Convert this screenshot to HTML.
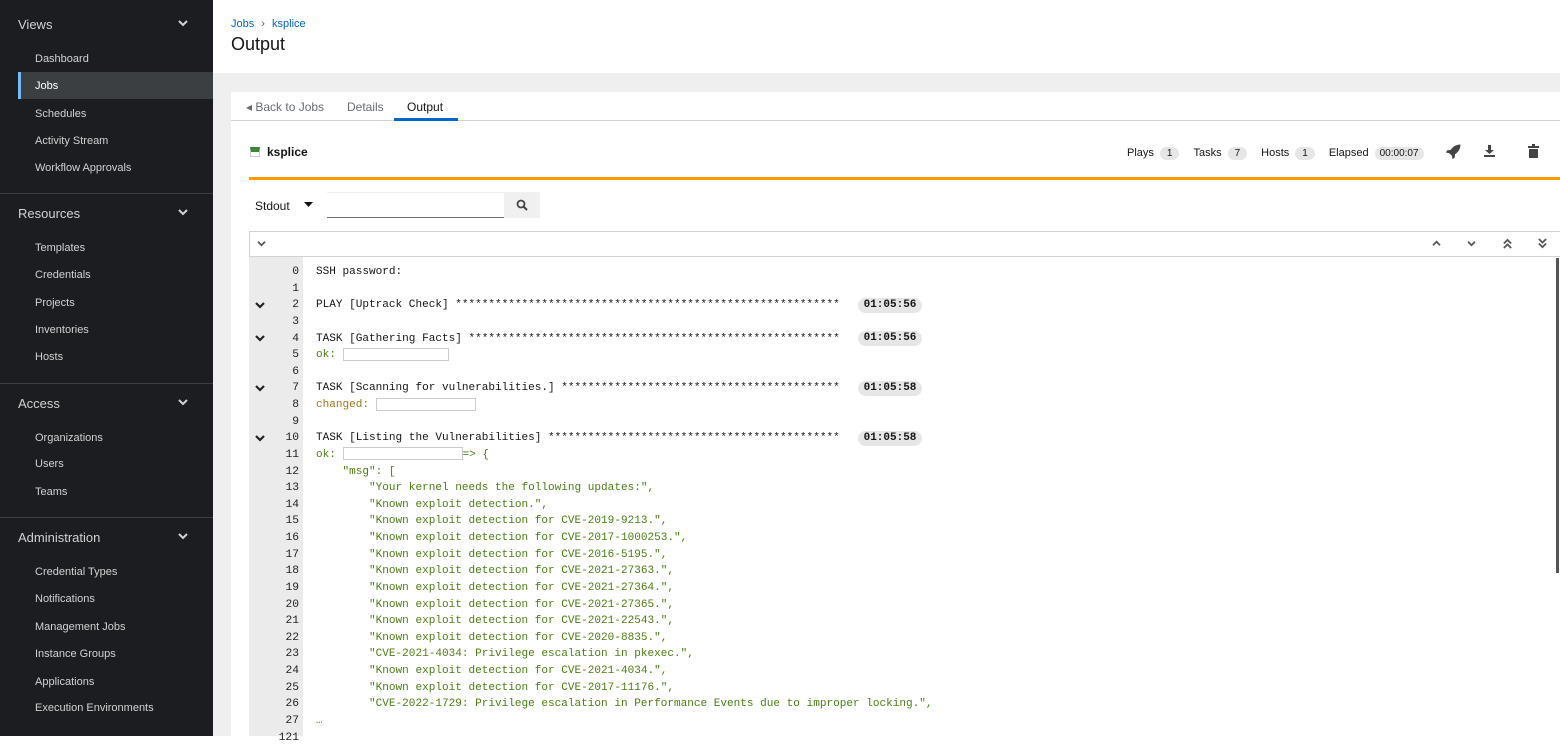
<!DOCTYPE html>
<html><head><meta charset="utf-8"><style>
*{margin:0;padding:0;box-sizing:border-box}
body{width:1560px;height:736px;overflow:hidden;background:#fff;font-family:"Liberation Sans",sans-serif;position:relative}
.sb{position:absolute;left:0;top:0;width:213px;height:736px;background:#1b1d21}
.sh{position:absolute;left:18px;font-size:13px;color:#d2d2d2}
.chev{position:absolute;left:178px;width:10px;height:10px}
.si{position:absolute;left:35px;font-size:11px;color:#d2d2d2}
.dv{position:absolute;left:0;width:213px;height:1px;background:#3c3f42}
.a{position:absolute}
.ln{position:absolute;left:249px;width:54px;text-align:right;padding-right:4px;color:#222;font-family:"Liberation Mono",monospace;font-size:11.3px;line-height:16.63px}
.tx{position:absolute;left:316px;white-space:pre;color:#151515;font-family:"Liberation Mono",monospace;font-size:11.05px;line-height:16.63px}
.g{color:#4d7d14}.c{color:#a6731a}
.ts{position:absolute;left:858px;width:64px;height:15px;border-radius:8px;background:#e6e6e6;font-family:"Liberation Mono",monospace;font-size:11px;font-weight:bold;text-align:center;line-height:15px;color:#151515}
.cv{position:absolute;left:255px;width:10px;height:8px}
.red{display:inline-block;border:1px solid #ccc;background:#fff;height:13px;vertical-align:middle}
.badge{display:inline-block;background:#e6e6e6;border-radius:8px;font-size:10px;padding:1px 7px;margin:0 14px 0 6px;color:#151515}
</style></head><body>
<div class="sb">
<div class="sh" style="top:17px">Views</div>
<svg class="chev" style="top:18px" viewBox="0 0 10 10"><path d="M1 3l4 4 4-4" stroke="#d2d2d2" stroke-width="2" fill="none"/></svg>
<div class="si" style="top:53px">Dashboard</div>
<div class="a" style="left:18px;top:72px;width:195px;height:27px;background:#3c3f42;border-left:3px solid #73bcf7"></div>
<div class="si" style="top:80px;color:#fff">Jobs</div>
<div class="si" style="top:108px">Schedules</div>
<div class="si" style="top:135px">Activity Stream</div>
<div class="si" style="top:162px">Workflow Approvals</div>
<div class="dv" style="top:193px"></div>
<div class="sh" style="top:206px">Resources</div>
<svg class="chev" style="top:207px" viewBox="0 0 10 10"><path d="M1 3l4 4 4-4" stroke="#d2d2d2" stroke-width="2" fill="none"/></svg>
<div class="si" style="top:242px">Templates</div>
<div class="si" style="top:269px">Credentials</div>
<div class="si" style="top:297px">Projects</div>
<div class="si" style="top:324px">Inventories</div>
<div class="si" style="top:351px">Hosts</div>
<div class="dv" style="top:383px"></div>
<div class="sh" style="top:396px">Access</div>
<svg class="chev" style="top:397px" viewBox="0 0 10 10"><path d="M1 3l4 4 4-4" stroke="#d2d2d2" stroke-width="2" fill="none"/></svg>
<div class="si" style="top:432px">Organizations</div>
<div class="si" style="top:458px">Users</div>
<div class="si" style="top:486px">Teams</div>
<div class="dv" style="top:517px"></div>
<div class="sh" style="top:530px">Administration</div>
<svg class="chev" style="top:531px" viewBox="0 0 10 10"><path d="M1 3l4 4 4-4" stroke="#d2d2d2" stroke-width="2" fill="none"/></svg>
<div class="si" style="top:566px">Credential Types</div>
<div class="si" style="top:593px">Notifications</div>
<div class="si" style="top:621px">Management Jobs</div>
<div class="si" style="top:648px">Instance Groups</div>
<div class="si" style="top:676px">Applications</div>
<div class="si" style="top:702px">Execution Environments</div>
</div>

<div class="a" style="left:231px;top:18px;font-size:11px;color:#06c">Jobs <span style="color:#555;margin:0 4px">›</span> ksplice</div>
<div class="a" style="left:231px;top:34px;font-size:18px;color:#151515">Output</div>
<div class="a" style="left:213px;top:73px;width:1347px;height:19px;background:#efefef"></div>
<div class="a" style="left:213px;top:92px;width:18px;height:644px;background:#efefef"></div>

<div class="a" style="left:231px;top:120px;width:1329px;height:1px;background:#d2d2d2"></div>
<div class="a" style="left:246px;top:100px;font-size:12px;color:#6a6e73">◂ Back to Jobs</div>
<div class="a" style="left:347px;top:100px;font-size:12px;color:#6a6e73">Details</div>
<div class="a" style="left:407px;top:100px;font-size:12px;color:#151515">Output</div>
<div class="a" style="left:394px;top:118px;width:64px;height:3px;background:#06c"></div>

<div class="a" style="left:250px;top:147px;width:10px;height:10px;border:1px solid #ccc;border-top:5px solid #3e8635"></div>
<div class="a" style="left:267px;top:145px;font-size:12px;font-weight:bold;color:#151515">ksplice</div>
<div class="a" style="left:1127px;top:147px;font-size:11px;color:#151515">Plays<span class="badge">1</span>Tasks<span class="badge">7</span>Hosts<span class="badge">1</span>Elapsed<span class="badge" style="margin-right:0;padding:1px 5px">00:00:07</span></div>
<svg class="a" style="left:1446px;top:144px" width="15" height="15" viewBox="0 0 14 14"><path d="M13.5 0.5C9 0.5 6 3 4.5 5.5L1 6l-1 2 3 0.5 2.5 2.5 0.5 3 2-1 0.5-3.5C11 8 13.5 5 13.5 0.5z" fill="#444"/></svg>
<svg class="a" style="left:1483px;top:144px" width="13" height="14" viewBox="0 0 13 14"><path d="M5 1h3v5h3L6.5 10 2 6h3zM1 11h11v2H1z" fill="#444"/></svg>
<svg class="a" style="left:1528px;top:144px" width="11" height="14" viewBox="0 0 11 14"><path d="M0 2h11v2H0zM4 0h3v2H4zM1 5h9v9H1z" fill="#444"/></svg>
<div class="a" style="left:249px;top:177px;width:1311px;height:3px;background:#f90"></div>

<div class="a" style="left:255px;top:199px;font-size:12px;color:#151515">Stdout</div>
<svg class="a" style="left:304px;top:202px" width="9" height="6" viewBox="0 0 9 6"><path d="M0 0h9L4.5 5z" fill="#151515"/></svg>
<div class="a" style="left:327px;top:192px;width:177px;height:26px;border-top:1px solid #f0f0f0;border-bottom:1px solid #6a6e73"></div>
<div class="a" style="left:504px;top:192px;width:36px;height:26px;background:#f0f0f0"></div>
<svg class="a" style="left:516px;top:199px" width="12" height="12" viewBox="0 0 12 12"><circle cx="5" cy="5" r="3.5" stroke="#444" stroke-width="1.8" fill="none"/><path d="M7.5 7.5L11 11" stroke="#444" stroke-width="2"/></svg>

<div class="a" style="left:249px;top:231px;width:1311px;height:26px;border:1px solid #d2d2d2;border-right:none"></div>
<svg class="a" style="left:257px;top:240px" width="9" height="7" viewBox="0 0 10 8"><path d="M1 2l4 4 4-4" stroke="#555" stroke-width="2" fill="none"/></svg>
<svg class="a" style="left:1432px;top:240px" width="9" height="7" viewBox="0 0 10 8"><path d="M1 6l4-4 4 4" stroke="#555" stroke-width="2" fill="none"/></svg>
<svg class="a" style="left:1467px;top:240px" width="9" height="7" viewBox="0 0 10 8"><path d="M1 2l4 4 4-4" stroke="#555" stroke-width="2" fill="none"/></svg>
<svg class="a" style="left:1503px;top:238px" width="9" height="11" viewBox="0 0 10 12"><path d="M1 6l4-4 4 4M1 11l4-4 4 4" stroke="#555" stroke-width="2" fill="none"/></svg>
<svg class="a" style="left:1538px;top:238px" width="9" height="11" viewBox="0 0 10 12"><path d="M1 1l4 4 4-4M1 6l4 4 4-4" stroke="#555" stroke-width="2" fill="none"/></svg>
<div class="a" style="left:249px;top:257px;width:54px;height:479px;background:#ebebeb"></div>
<div class="a" style="left:1556px;top:258px;width:3px;height:315px;background:#555"></div>

<div class="ln" style="top:264px">0<br>1<br>2<br>3<br>4<br>5<br>6<br>7<br>8<br>9<br>10<br>11<br>12<br>13<br>14<br>15<br>16<br>17<br>18<br>19<br>20<br>21<br>22<br>23<br>24<br>25<br>26<br>27<br>121</div>
<div class="tx" style="top:264px">SSH password:

PLAY [Uptrack Check] **********************************************************

TASK [Gathering Facts] ********************************************************
<span class="g">ok: <span class="red" style="width:106px"></span></span>

TASK [Scanning for vulnerabilities.] ******************************************
<span class="c">changed: <span class="red" style="width:100px"></span></span>

TASK [Listing the Vulnerabilities] ********************************************
<span class="g">ok: <span class="red" style="width:120px"></span>=&gt; {
    "msg": [
        "Your kernel needs the following updates:",
        "Known exploit detection.",
        "Known exploit detection for CVE-2019-9213.",
        "Known exploit detection for CVE-2017-1000253.",
        "Known exploit detection for CVE-2016-5195.",
        "Known exploit detection for CVE-2021-27363.",
        "Known exploit detection for CVE-2021-27364.",
        "Known exploit detection for CVE-2021-27365.",
        "Known exploit detection for CVE-2021-22543.",
        "Known exploit detection for CVE-2020-8835.",
        "CVE-2021-4034: Privilege escalation in pkexec.",
        "Known exploit detection for CVE-2021-4034.",
        "Known exploit detection for CVE-2017-11176.",
        "CVE-2022-1729: Privilege escalation in Performance Events due to improper locking.",</span>
<span class="c">…</span></div>
<div class="ts" style="top:298px">01:05:56</div>
<div class="ts" style="top:331px">01:05:56</div>
<div class="ts" style="top:381px">01:05:58</div>
<div class="ts" style="top:431px">01:05:58</div>
<svg class="cv" style="top:301px" viewBox="0 0 10 8"><path d="M1 2l4 4 4-4" stroke="#222" stroke-width="2.2" fill="none"/></svg>
<svg class="cv" style="top:334px" viewBox="0 0 10 8"><path d="M1 2l4 4 4-4" stroke="#222" stroke-width="2.2" fill="none"/></svg>
<svg class="cv" style="top:384px" viewBox="0 0 10 8"><path d="M1 2l4 4 4-4" stroke="#222" stroke-width="2.2" fill="none"/></svg>
<svg class="cv" style="top:434px" viewBox="0 0 10 8"><path d="M1 2l4 4 4-4" stroke="#222" stroke-width="2.2" fill="none"/></svg>
</body></html>
